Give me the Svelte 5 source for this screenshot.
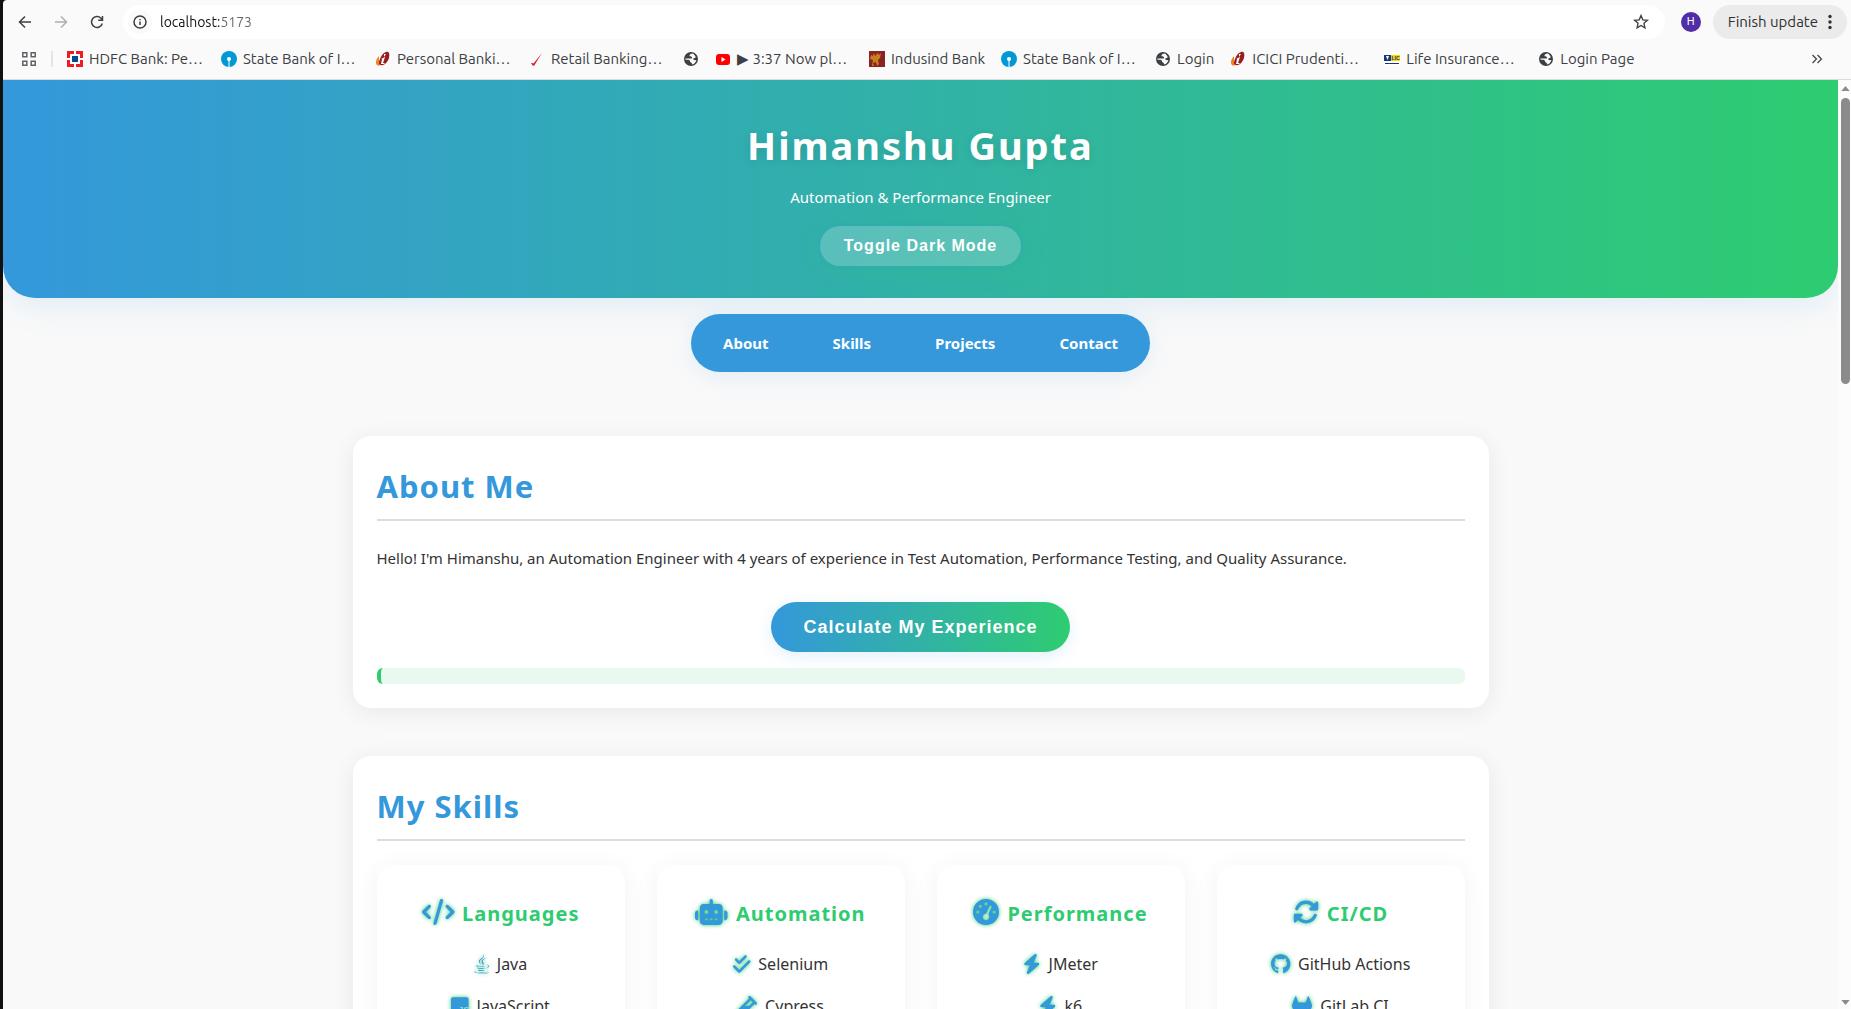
<script>
  const bookmarks = [
    { icon: 'hdfc', text: 'HDFC Bank: Pe…', long: true },
    { icon: 'sbi', text: 'State Bank of I…', long: true },
    { icon: 'icici', text: 'Personal Banki…', long: true },
    { icon: 'slash', text: 'Retail Banking…', long: true },
    { icon: 'globe', text: '' },
    { icon: 'youtube', text: '▶ 3:37 Now pl…', long: true },
    { icon: 'indusind', text: 'Indusind Bank' },
    { icon: 'sbi', text: 'State Bank of I…', long: true },
    { icon: 'globe', text: 'Login' },
    { icon: 'icici', text: 'ICICI Prudenti…', long: true },
    { icon: 'lic', text: 'Life Insurance…', long: true },
    { icon: 'globe', text: 'Login Page' }
  ];

  const links = ['About', 'Skills', 'Projects', 'Contact'];

  const glyphs = {
    code: ['0 0 640 512', 'M392.8 1.2c-17-4.9-34.7 5-39.6 22l-128 448c-4.9 17 5 34.7 22 39.6s34.7-5 39.6-22l128-448c4.9-17-5-34.7-22-39.6zm80.6 120.1c-12.5 12.5-12.5 32.8 0 45.3L562.7 256l-89.4 89.4c-12.5 12.5-12.5 32.8 0 45.3s32.8 12.5 45.3 0l112-112c12.5-12.5 12.5-32.8 0-45.3l-112-112c-12.5-12.5-32.8-12.5-45.3 0zm-306.7 0c-12.5-12.5-32.8-12.5-45.3 0l-112 112c-12.5 12.5-12.5 32.8 0 45.3l112 112c12.5 12.5 32.8 12.5 45.3 0s12.5-32.8 0-45.3L77.3 256l89.4-89.4c12.5-12.5 12.5-32.8 0-45.3z'],
    robot: ['0 0 640 512', 'M320 0c17.7 0 32 14.3 32 32V96H472c39.8 0 72 32.2 72 72V440c0 39.8-32.2 72-72 72H168c-39.8 0-72-32.2-72-72V168c0-39.8 32.2-72 72-72H288V32c0-17.7 14.3-32 32-32zM208 384c-8.8 0-16 7.2-16 16s7.2 16 16 16h32c8.8 0 16-7.2 16-16s-7.2-16-16-16H208zm96 0c-8.8 0-16 7.2-16 16s7.2 16 16 16h32c8.8 0 16-7.2 16-16s-7.2-16-16-16H304zm96 0c-8.8 0-16 7.2-16 16s7.2 16 16 16h32c8.8 0 16-7.2 16-16s-7.2-16-16-16H400zM264 256a40 40 0 1 0 -80 0 40 40 0 1 0 80 0zm152 40a40 40 0 1 0 0-80 40 40 0 1 0 0 80zM48 224H64V416H48c-26.5 0-48-21.5-48-48V272c0-26.5 21.5-48 48-48zm544 0c26.5 0 48 21.5 48 48v96c0 26.5-21.5 48-48 48H576V224h16z'],
    gauge: ['0 0 512 512', 'M0 256a256 256 0 1 1 512 0A256 256 0 1 1 0 256zM288 96a32 32 0 1 0 -64 0 32 32 0 1 0 64 0zM256 416c35.3 0 64-28.7 64-64c0-17.4-6.9-33.1-18.1-44.6L366 161.7c5.3-12.1-.2-26.3-12.3-31.6s-26.3 .2-31.6 12.3L257.9 288c-.6 0-1.3 0-1.9 0c-35.3 0-64 28.7-64 64s28.7 64 64 64zM176 144a32 32 0 1 0 -64 0 32 32 0 1 0 64 0zM96 288a32 32 0 1 0 0-64 32 32 0 1 0 0 64zm352-32a32 32 0 1 0 -64 0 32 32 0 1 0 64 0z'],
    rotate: ['0 0 512 512', 'M142.9 142.9c62.2-62.2 162.7-62.5 225.3-1L327 183c-6.9 6.9-8.9 17.2-5.2 26.2s12.5 14.8 22.2 14.8H463.5H472c13.3 0 24-10.7 24-24V72c0-9.7-5.8-18.5-14.8-22.2s-19.3-1.7-26.2 5.2L413.4 96.6c-87.6-86.5-228.7-86.2-315.8 1C73.2 122 55.6 150.7 44.8 181.4c-5.9 16.7 2.9 34.9 19.5 40.8s34.9-2.9 40.8-19.5c7.7-21.8 20.2-42.3 37.8-59.8zM16 312v7.6 .7V440c0 9.7 5.8 18.5 14.8 22.2s19.3 1.7 26.2-5.2l41.6-41.6c87.6 86.5 228.7 86.2 315.8-1c24.4-24.4 42.1-53.1 52.9-83.7c5.9-16.7-2.9-34.9-19.5-40.8s-34.9 2.9-40.8 19.5c-7.7 21.8-20.2 42.3-37.8 59.8c-62.2 62.2-162.7 62.5-225.3 1L185 329c6.9-6.9 8.9-17.2 5.2-26.2s-12.5-14.8-22.2-14.8H48.4h-.7H40c-13.3 0-24 10.7-24 24z'],
    java: ['0 0 384 512', 'M277.74 312.9c9.8-6.7 23.4-12.5 23.4-12.5s-38.7 7-77.2 10.2c-47.1 3.9-97.7 4.7-123.1 1.3-60.1-8 33-30.1 33-30.1s-36.1-2.4-80.6 19c-52.5 25.4 130 37 224.5 12.1zm-85.4-32.1c-19-42.7-83.1-80.2 0-145.8C296 53.2 242.84 0 242.84 0c21.5 84.5-75.6 110.1-110.7 162.6-23.9 35.9 11.7 74.4 60.2 118.2zm114.6-176.2c.1 0-175.2 43.8-91.5 140.2 24.7 28.4-6.5 54-6.5 54s62.7-32.4 33.9-72.9c-26.9-37.8-47.5-56.6 64.1-121.3zm-6.1 270.5a12.19 12.19 0 0 1-2 2.6c128.3-33.7 81.1-118.9 19.8-97.3a17.33 17.33 0 0 0-8.2 6.3 70.45 70.45 0 0 1 11-3c31-6.5 75.5 41.5-20.6 91.4zM348 437.4s14.5 11.9-15.9 21.2c-57.9 17.5-240.8 22.8-291.6.7-18.3-7.9 16-19 26.8-21.3 11.2-2.4 17.7-2 17.7-2-20.3-14.3-131.3 28.1-56.4 40.2C232.84 509.4 401 461.3 348 437.4zM124.44 396c-78.7 22 47.9 67.4 148.1 24.5a185.89 185.89 0 0 1-28.2-13.8c-44.7 8.5-65.4 9.1-106 4.5-33.5-3.8-13.9-15.2-13.9-15.2zm179.8 97.2c-78.7 14.8-175.8 13.1-233.3 3.6 0-.1 11.8 9.7 72.4 13.6 92.2 5.9 233.8-3.3 237.1-46.9 0 0-6.4 16.5-76.2 29.7zM260.64 353c-59.2 11.4-93.5 11.1-136.8 6.6-33.5-3.5-11.6-19.7-11.6-19.7-86.8 28.8 48.2 61.4 169.5 25.9a60.37 60.37 0 0 1-21.1-12.8z'],
    js: ['0 0 448 512', 'M48 32H400c26.500 0 48 21.500 48 48V432c0 26.500-21.500 48-48 48H48c-26.500 0-48-21.500-48-48V80c0-26.500 21.500-48 48-48z'],
    checks: ['0 0 448 512', 'M342.6 86.6c12.5-12.5 12.5-32.8 0-45.3s-32.8-12.5-45.3 0L160 178.7l-57.4-57.4c-12.5-12.5-32.8-12.5-45.3 0s-12.5 32.8 0 45.3l80 80c12.5 12.5 32.8 12.5 45.3 0l160-160zm96 128c12.5-12.5 12.5-32.8 0-45.3s-32.8-12.5-45.3 0L160 402.7 54.6 297.4c-12.5-12.5-32.8-12.5-45.3 0s-12.5 32.8 0 45.3l128 128c12.5 12.5 32.8 12.5 45.3 0l256-256z'],
    vial: ['0 0 512 512', 'M342.6 9.4c-12.5-12.5-32.8-12.5-45.3 0s-12.5 32.8 0 45.3l9.4 9.4L28.1 342.6C10.1 360.6 0 385 0 410.5V416c0 53 43 96 96 96h5.5c25.5 0 49.9-10.1 67.9-28.1L448 205.3l9.4 9.4c12.5 12.5 32.8 12.5 45.3 0s12.5-32.8 0-45.3l-32-32-96-96-32-32zM205.3 256L352 109.3 402.700 160l-96 96H205.300z'],
    bolt: ['0 0 448 512', 'M349.4 44.6c5.9-13.7 1.5-29.7-10.6-38.5s-28.6-8-39.9 1.8l-256 224c-10 8.8-13.6 22.9-8.9 35.3S50.7 288 64 288H175.5L98.6 467.4c-5.9 13.7-1.5 29.7 10.6 38.5s28.6 8 39.9-1.8l256-224c10-8.8 13.6-22.9 8.9-35.3s-16.6-20.7-30-20.7H272.5L349.4 44.6z'],
    github: ['0 0 496 512', 'M244.8 8C106.1 8 0 113.3 0 252c0 110.9 69.8 205.8 169.5 239.2 12.8 2.3 17.3-5.6 17.3-12.1 0-6.2-.3-40.4-.3-61.4 0 0-70 15-84.7-29.8 0 0-11.4-29.1-27.8-36.6 0 0-22.9-15.7 1.6-15.4 0 0 24.9 2 38.6 25.8 21.9 38.6 58.6 27.5 72.9 20.9 2.3-16 8.8-27.1 16-33.7-55.9-6.2-112.3-14.3-112.3-110.5 0-27.5 7.6-41.3 23.6-58.9-2.600-6.500-11.100-33.300 2.600-67.900 20.900-6.500 69 27 69 27 20-5.600 41.500-8.500 62.800-8.500s42.800 2.900 62.800 8.500c0 0 48.100-33.600 69-27 13.700 34.700 5.200 61.400 2.600 67.900 16 17.700 25.800 31.500 25.800 58.900 0 96.500-58.900 104.200-114.800 110.500 9.200 7.900 17 22.900 17 46.400 0 33.700-.3 75.400-.3 83.600 0 6.500 4.600 14.400 17.300 12.100C428.200 457.800 496 362.900 496 252 496 113.300 383.500 8 244.800 8z'],
    gitlab: ['0 0 512 512', 'M503.5 204.6L502.8 202.8L433.1 21.02C431.7 17.45 429.2 14.43 425.9 12.38C423.5 10.83 420.8 9.865 417.9 9.57C415 9.275 412.2 9.653 409.5 10.68C406.8 11.7 404.4 13.34 402.4 15.46C400.5 17.58 399.1 20.13 398.3 22.9L351.3 166.9H160.8L113.7 22.9C112.9 20.13 111.5 17.59 109.6 15.47C107.6 13.35 105.2 11.72 102.5 10.7C99.86 9.675 96.98 9.295 94.12 9.587C91.26 9.878 88.51 10.83 86.08 12.38C82.84 14.43 80.33 17.45 78.92 21.02L9.267 202.8L8.543 204.6C-1.484 230.8-2.72 259.6 5.023 286.6C12.77 313.5 29.07 337.3 51.47 354.2L158.3 434.3L242.9 498.2C246.6 500.1 251.2 502.5 255.9 502.5C260.6 502.5 265.2 500.1 268.9 498.2L353.5 434.3L460.5 354.1C482.9 337.2 499.2 313.5 506.1 286.6C514.7 259.6 513.5 230.8 503.5 204.6z']
  };

  const skills = [
    { title: 'Languages', icon: 'code', items: [['java', 'Java'], ['js', 'JavaScript']] },
    { title: 'Automation', icon: 'robot', items: [['checks', 'Selenium'], ['vial', 'Cypress']] },
    { title: 'Performance', icon: 'gauge', items: [['bolt', 'JMeter'], ['bolt', 'k6']] },
    { title: 'CI/CD', icon: 'rotate', items: [['github', 'GitHub Actions'], ['gitlab', 'GitLab CI']] }
  ];

  let dark = $state(false);
  let address = $state('localhost:5173');
  let result = $state('');
</script>

{#snippet glyph(name)}
  <svg class="glyph" viewBox={glyphs[name][0]} aria-hidden="true">
    <path d={glyphs[name][1]} />
    {#if name === 'js'}
      <text class="js" x="190" y="436">JS</text>
    {/if}
  </svg>
{/snippet}

{#snippet favicon(name)}
  <svg class="fav" viewBox="0 0 16 16" aria-hidden="true">
    {#if name === 'hdfc'}
      <path fill="#ed1c24" d="M0 0h16v16H0z" />
      <path fill="#fff" d="M3 3h10v10H3zM7 0h2v16H7zM0 7h16v2H0z" />
      <path fill="#004c8f" d="M5 5h6v6H5z" />
    {:else if name === 'sbi'}
      <circle cx="8" cy="8" r="8" fill="#0099d5" />
      <circle cx="8" cy="8" r="2" fill="#fff" />
      <path fill="#fff" d="M7.500 8h1v8h-1z" />
    {:else if name === 'icici'}
      <path fill="#f58220" d="M4 5C1 8 0 12 2 14c1 1 2 1 3 0L4 11z" />
      <path fill="#9b1c1f" d="M11 1c3-1 4 2 3 6-1 3-3 6-6 7-4 1-5-2-3-6 1-3 3-6 6-7z" />
      <path fill="#fff" d="M9 3h2L9 6zM6 8l4-2-2 6h2l-1 1H6l1-5z" />
    {:else if name === 'slash'}
      <path fill="#d8232a" d="M13 2 5 15 2 12l2.500.5z" />
      <path fill="#d8232a" d="M2 12l2 3 1-2z" />
    {:else if name === 'youtube'}
      <rect x="1" y="3" width="14" height="11" rx="3" fill="#f00" />
      <path fill="#fff" d="M6.500 6v5L10.500 8.500z" />
    {:else if name === 'indusind'}
      <path fill="#8a2323" d="M0 0h16v16H0z" />
      <path fill="#c8801f" d="M2 4l2 1 1-3 1 3 3-3 1 2 2-2-1 5-2 2 1 4-2 2-1-4-3 1 1 3H3l1-6-3-1z" />
    {:else if name === 'lic'}
      <path fill="#fff" d="M0 1h16v14H0z" />
      <path fill="#123a83" d="M0 4h7v6H0zM1 12h14v1H1z" />
      <path fill="#ffd400" d="M7 4h9v6H7z" />
      <path fill="#fff" d="M2 5h3L3.500 9z" />
      <text class="lic" x="7.500" y="9">LIC</text>
    {:else}
      <circle cx="8" cy="8" r="7" fill="#3c4043" />
      <path fill="#fafafa" d="M9.500 2.500C8 2.500 6.500 3.500 6.500 4.500c0 1.200 1.500.8 2.200 1.400.8.700.3 1.600-.7 1.600H2.500v1.200c1.500 0 3-.2 4 .5 1 .8.300 1.800 1.300 2.200 1.200.4 1.200 1 1.200 2.100 2.200-.4 4-2.200 4.400-4.500-1 .3-2.400.2-3-.5-.6-.8.200-1.500 1.300-1.600 1-.1 1.200-.8.600-1.600C11.600 3.800 10.700 2.700 9.500 2.500z" />
    {/if}
  </svg>
{/snippet}

<div class="window">
  <div class="chrome">
    <div class="toolbar">
      <div class="history">
        <button class="tool" aria-label="Back">
          <svg viewBox="0 0 16 16"><path d="M14 8H3M8 2.500 2.500 8 8 13.500" /></svg>
        </button>
        <button class="tool" aria-label="Forward" disabled>
          <svg viewBox="0 0 16 16"><path d="M2 8h11M8 2.500 13.500 8 8 13.500" /></svg>
        </button>
        <button class="tool" aria-label="Reload">
          <svg viewBox="0 0 16 16"><path d="M13.300 9.500A5.500 5.500 0 1 1 12 4.200L13.500 6M13.500 2v4.300H9.200" /></svg>
        </button>
      </div>
      <div class="omnibox">
        <button class="info" aria-label="View site information">
          <svg viewBox="0 0 16 16"><circle cx="8" cy="8" r="6" /><path d="M8 7.500V11M8 5v1.200" /></svg>
        </button>
        <input class="address" aria-label="Address" bind:value={address} />
        <button class="tool" aria-label="Bookmark this page">
          <svg class="star" viewBox="0 0 16 16"><path d="M8 2.200 9.600 6.100l4.100.4-3.100 2.700.9 4L8 11.100l-3.500 2.100.9-4-3.100-2.700 4.100-.4z" /></svg>
        </button>
      </div>
      <button class="avatar" aria-label="Profile">H</button>
      <button class="update">
        Finish update
        <svg viewBox="0 0 4 16" aria-hidden="true"><circle cx="2" cy="2.500" r="1.700" /><circle cx="2" cy="8" r="1.700" /><circle cx="2" cy="13.500" r="1.700" /></svg>
      </button>
    </div>
    <div class="bookmarks">
      <button class="apps" aria-label="Tab groups">
        <svg viewBox="0 0 16 16"><path d="M1.800 1.800h4v4h-4zM10.200 1.800h4v4h-4zM1.800 10.200h4v4h-4zM10.200 10.200h4v4h-4z" /></svg>
      </button>
      <span class="divider"></span>
      {#each bookmarks as mark}
        <a class="bookmark" class:long={mark.long} href="#top" aria-label={mark.text || 'Bookmark'}>
          {@render favicon(mark.icon)}{#if mark.text}<span>{mark.text}</span>{/if}
        </a>
      {/each}
      <button class="more" aria-label="More bookmarks">
        <svg viewBox="0 0 12 12"><path d="M1.500 2 5.500 6l-4 4M6.500 2l4 4-4 4" /></svg>
      </button>
    </div>
  </div>

  <div class="viewport">
    <div class="page" class:dark id="top">
      <header>
        <h1>Himanshu Gupta</h1>
        <p>Automation &amp; Performance Engineer</p>
        <button class="toggle" onclick={() => (dark = !dark)}>Toggle Dark Mode</button>
      </header>
      <nav>
        {#each links as link}
          <a href={'#' + link.toLowerCase()}>{link}</a>
        {/each}
      </nav>
      <main>
        <section id="about">
          <h2>About Me</h2>
          <p>Hello! I'm Himanshu, an Automation Engineer with 4 years of experience in Test Automation, Performance Testing, and Quality Assurance.</p>
          <button class="calculate" onclick={() => (result = '4 years')}>Calculate My Experience</button>
          <div class="result">{result}</div>
        </section>
        <section id="skills">
          <h2>My Skills</h2>
          <div class="grid">
            {#each skills as skill}
              <article>
                <h3>{@render glyph(skill.icon)}{skill.title}</h3>
                <ul>
                  {#each skill.items as [icon, label]}
                    <li>{@render glyph(icon)}{label}</li>
                  {/each}
                </ul>
              </article>
            {/each}
          </div>
        </section>
      </main>
    </div>
    <div class="scrollbar" aria-hidden="true">
      <svg viewBox="0 0 10 6"><path d="M0 6 5 0l5 6z" /></svg>
      <div class="track"><div class="thumb"></div></div>
      <svg viewBox="0 0 10 6"><path d="M0 0l5 6 5-6z" /></svg>
    </div>
  </div>
</div>

<style>
  :global(body) {
    background: #111;
  }
  .window {
    display: flex;
    flex-direction: column;
    height: 100vh;
    padding-left: 3px;
    box-sizing: border-box;
    overflow: hidden;
  }
  .window * {
    box-sizing: border-box;
  }
  button {
    border: 0;
    padding: 0;
    background: none;
    cursor: pointer;
  }
  a {
    text-decoration: none;
  }

  /* Browser bars */
  .chrome {
    flex: none;
    padding-top: 5px;
    background: #fafafa;
    border-bottom: 1px solid #dcdcdc;
    border-top-left-radius: 4px;
    font: 15px/20px Ubuntu, "Noto Sans", sans-serif;
    color: #3c4043;
  }
  .chrome svg {
    display: block;
    fill: none;
    stroke: #3c4043;
    stroke-width: 1.5;
  }
  .toolbar {
    display: flex;
    align-items: center;
    height: 34px;
    padding-right: 4px;
  }
  .history {
    display: flex;
    gap: 8px;
    padding: 0 12px 0 8px;
  }
  .tool {
    display: grid;
    place-items: center;
    width: 28px;
    height: 28px;
  }
  .tool svg,
  .info svg {
    width: 16px;
    height: 16px;
  }
  .tool:disabled {
    opacity: 0.4;
  }
  .tool .star {
    width: 18px;
    height: 18px;
    stroke-width: 1.2;
  }
  .omnibox {
    flex: 1;
    display: flex;
    align-items: center;
    height: 34px;
    padding: 0 10px 0 5px;
    border-radius: 17px;
    background: #fff;
  }
  .info {
    display: grid;
    place-items: center;
    width: 24px;
    height: 24px;
    border-radius: 50%;
    background: #fafafa;
  }
  .address {
    flex: 1;
    border: 0;
    outline: 0;
    padding: 0 0 0 8px;
    font: inherit;
    font-size: 14px;
    color: transparent;
    background: linear-gradient(90deg, #111 67px, #666 67px);
    background-clip: text;
  }
  .avatar {
    width: 20px;
    height: 20px;
    margin: 0 12px 0 16px;
    border-radius: 50%;
    background: #512da8;
    color: #fff;
    font: 11px/20px Roboto, sans-serif;
  }
  .update {
    display: flex;
    align-items: center;
    gap: 10px;
    height: 34px;
    padding: 0 15px;
    border-radius: 17px;
    background: #ebebeb;
    font: inherit;
    color: #303030;
  }
  .update svg {
    width: 4px;
    height: 16px;
    fill: #303030;
    stroke: none;
  }
  .bookmarks {
    display: flex;
    align-items: center;
    height: 40px;
    padding-left: 18px;
  }
  .apps svg {
    width: 16px;
    height: 16px;
    stroke: #5f6368;
  }
  .divider {
    width: 2px;
    height: 16px;
    margin: 0 14px;
    background: #e4e4e4;
  }
  .bookmark {
    display: flex;
    align-items: center;
    gap: 6px;
    padding-right: 16px;
    white-space: nowrap;
    color: #3c4043;
  }
  .long {
    flex: 0 0 154px;
    padding-right: 0;
  }
  .chrome .fav {
    flex: none;
    width: 16px;
    height: 16px;
    stroke: none;
  }
  .lic {
    font: bold 5px "Liberation Sans", sans-serif;
    fill: #123a83;
  }
  .more {
    margin: 0 28px 0 auto;
  }
  .more svg {
    width: 12px;
    height: 12px;
    stroke-width: 1.2;
  }

  /* Page */
  .viewport {
    flex: 1;
    display: flex;
    min-height: 0;
    background: #f9f9f9;
  }
  .page {
    flex: 1;
    overflow: hidden;
    background: #f9f9f9;
    color: #333;
    font: 15px/26px "Segoe UI", "Noto Sans", sans-serif;
  }
  .page.dark {
    background: #222;
  }
  h1,
  h2,
  h3,
  p,
  ul {
    margin: 0;
  }
  header {
    padding: 32px 16px;
    border-radius: 0 0 32px 32px;
    background: linear-gradient(90deg, #3498db, #2ecc71);
    box-shadow: 0 8px 32px rgba(52, 152, 219, 0.12);
    color: #fff;
    text-align: center;
  }
  h1 {
    margin-bottom: 6px;
    font-size: 38px;
    line-height: 66px;
    letter-spacing: 2px;
    text-shadow: 0 2px 8px rgba(0, 0, 0, 0.1);
  }
  .toggle {
    height: 40px;
    margin-top: 16px;
    padding: 0 24px;
    border-radius: 20px;
    background: rgba(255, 255, 255, 0.2);
    box-shadow: 0 0 4px rgba(52, 152, 219, 0.5), 0 4px 24px rgba(46, 204, 113, 0.2);
    color: #fff;
    font: bold 16px/20px "Liberation Sans", Arial, sans-serif;
    letter-spacing: 1px;
    vertical-align: top;
  }
  nav {
    display: flex;
    gap: 64px;
    width: fit-content;
    margin: 16px auto 64px;
    padding: 16px 32px;
    border-radius: 29px;
    background: #3498db;
    box-shadow: 0 4px 24px rgba(52, 152, 219, 0.12);
  }
  nav a {
    color: #fff;
    font-weight: 700;
  }
  main {
    max-width: 1200px;
    margin: 0 auto;
    padding: 0 32px;
  }
  section {
    margin-bottom: 48px;
    padding: 24px;
    border-radius: 18px;
    background: #fff;
    box-shadow: 0 4px 24px rgba(0, 0, 0, 0.07);
  }
  h2 {
    margin-bottom: 24px;
    padding-bottom: 6px;
    border-bottom: 2px solid #ddd;
    color: #3498db;
    font-size: 31px;
    line-height: 53px;
    letter-spacing: 1px;
  }
  .calculate {
    display: block;
    height: 50px;
    margin: 31px auto 16px;
    padding: 0 32px;
    border-radius: 25px;
    background: linear-gradient(90deg, #3498db, #2ecc71);
    box-shadow: 0 4px 16px rgba(52, 152, 219, 0.15);
    color: #fff;
    font: bold 18px/20px "Liberation Sans", Arial, sans-serif;
    letter-spacing: 1px;
  }
  .result {
    padding: 8px 16px;
    border-left: 4px solid #2ecc71;
    border-radius: 6px;
    background: #e9f9f0;
  }
  .grid {
    display: grid;
    grid-template-columns: repeat(4, 1fr);
    gap: 32px;
  }
  article {
    padding: 24px 16px;
    border-radius: 18px;
    background: #fff;
    box-shadow: 0 4px 24px rgba(52, 73, 94, 0.07);
  }
  h3 {
    display: flex;
    align-items: center;
    justify-content: center;
    gap: 8px;
    margin-bottom: 4px;
    color: #2ecc71;
    font-size: 20px;
    line-height: 50px;
    letter-spacing: 1px;
  }
  ul {
    padding: 0;
    list-style: none;
  }
  li {
    display: flex;
    align-items: center;
    justify-content: center;
    gap: 8px;
    font-size: 16px;
    line-height: 42px;
  }
  .glyph {
    flex: none;
    height: 26px;
    fill: #3498db;
    filter: drop-shadow(0 0 2px #2ecc71);
    overflow: visible;
  }
  h3 .glyph {
    margin-bottom: 4px;
  }
  li .glyph {
    height: 20px;
  }
  .js {
    font: bold 230px "Liberation Sans", sans-serif;
    fill: #8fe0c0;
  }

  /* Scroll bar */
  .scrollbar {
    display: flex;
    flex-direction: column;
    align-items: center;
    gap: 7px;
    width: 13px;
    padding: 6px 0 4px 2px;
    background: #fcfcfc;
  }
  .scrollbar svg {
    width: 9px;
    height: 5px;
    fill: #8b8b8b;
  }
  .track {
    flex: 1;
    width: 9px;
  }
  .thumb {
    height: 32%;
    border-radius: 5px;
    background: #8b8b8b;
  }
</style>
